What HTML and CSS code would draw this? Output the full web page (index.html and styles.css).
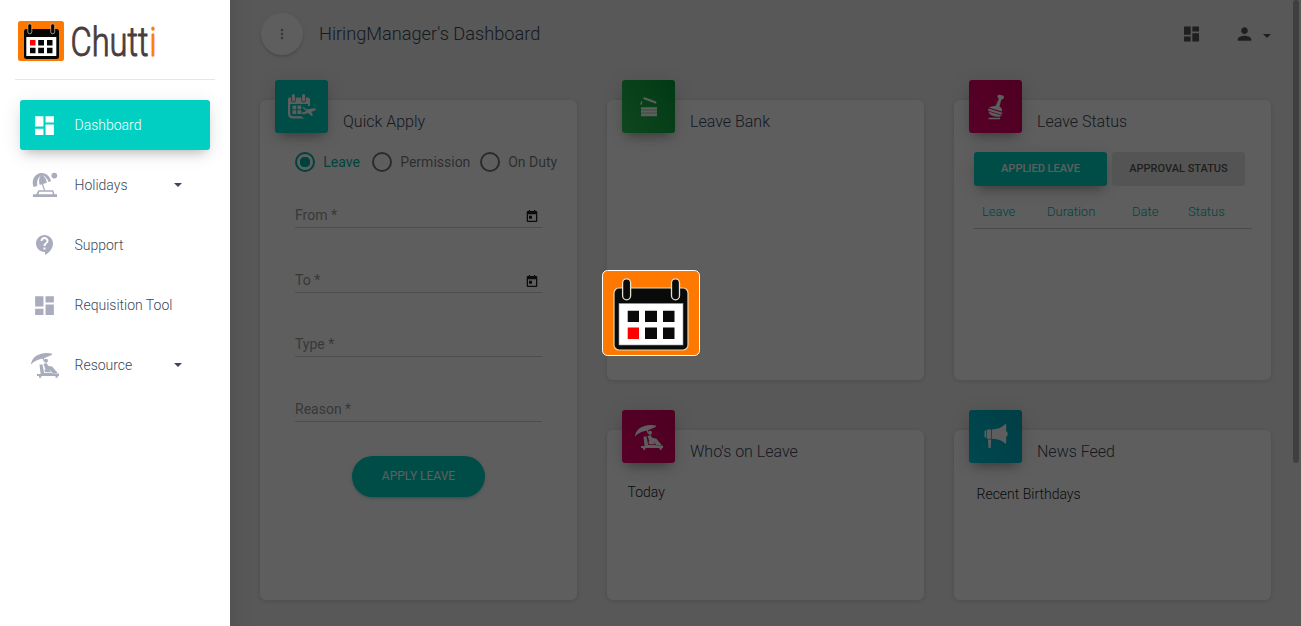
FILE: index.html
```html
<!DOCTYPE html>
<html lang="en">
<head>
<meta charset="utf-8">
<title>Chutti</title>
<link rel="stylesheet" href="styles.css">
</head>
<body>
<svg class="defs" aria-hidden="true">
  <symbol id="dash" viewBox="0 0 24 24"><path d="M3 13h8V3H3v10zm0 8h8v-6H3v6zm10 0h8V11h-8v10zm0-18v6h8V3h-8z"/></symbol>
  <symbol id="lounger" viewBox="0 0 28 26">
    <path d="M0 12.500C.5 5 9-.8 21 1.500L20.700 3 13 6.300C7 7.500 3 9 0 12.500z"/>
    <path d="M11.500 6l1.200-.4 1 3.500-1 .5z"/>
    <circle cx="15" cy="8.800" r="2"/>
    <path d="M8.500 12.500h3l1.700 8.500h6.300l6 .8 2.500-.2V24h-1.200v1.800h-2.300V24H10.300v1.800H8V24H6v-2h3.600z"/>
    <path d="M12.500 12l3-1 1.700 2.800 4.300 1 2.500 3.300 2.500 2.300-.5 1-4.500-.2-2-2.700-4.800-.5z"/>
    <path d="M13.400 17.500l5 .6 2 2.200h-6.500z"/>
  </symbol>
  <symbol id="umbrella" viewBox="0 0 26 26">
    <path d="M1.500 15C-1 8 3 1.500 9 1 14 .8 18 4 19 9.300l-2.500.6C15.500 7 13.500 4.500 10.500 3c3 2.500 4 5 4.300 7.800L7.700 13C6.500 9 7 5.500 9.300 3 5.500 6 4.700 9.500 5.300 14z"/>
    <path d="M9.800 12l1.200-.3 2.300 7H12z"/><circle cx="22.300" cy="3.600" r="2.900"/>
    <path d="M6.300 18.300h15l1.200 3.900H25v2.800H1v-2.800h3.300zm1 1.500L6.500 22.200h14.400l-.7-2.400z" fill-rule="evenodd"/>
  </symbol>
  <symbol id="datepick" viewBox="0 0 12 13"><path d="M1.800 1h1V0h1.300v1h3.800V0h1.300v1h1Q11.300 1 11.300 2.200v8.600Q11.300 12 10.200 12H1.800Q.7 12 .7 10.800V2.200Q.7 1 1.800 1zM2 4.200v6.500h8V4.200zM3 5.700h3v3H3z" fill-rule="evenodd"/></symbol>
</svg>

<aside class="sidebar">
  <div class="brand">
    <svg class="brand-mark" viewBox="0 0 46 40">
      <rect width="46" height="40" rx="2.500" fill="#ff7800"/>
      <rect x="6" y="8" width="35" height="30" rx="2.500" fill="#050505"/>
      <rect x="8.300" y="16" width="30" height="19" fill="#fff"/>
      <g fill="#050505" stroke="#e8c9a8" stroke-width=".7"><rect x="9.800" y="2.800" width="4" height="10" rx="2"/><rect x="32.700" y="2.800" width="4" height="10" rx="2"/></g>
      <path fill="red" d="M12 19h5.500v5.500H12z"/>
      <path fill="#050505" d="M20.200 19H26v5.500h-5.800zM29 19h5.500v5.500H29zM12 26.800h5.500v5.500H12zM20.200 26.800H26v5.500h-5.800zM29 26.800h5.500v5.500H29z"/>
    </svg>
    <svg class="brand-name" viewBox="0 0 88 42"><text x="-.5" y="35" textLength="78" lengthAdjust="spacingAndGlyphs">Chutt</text><text class="accent" x="78.500" y="35" textLength="7" lengthAdjust="spacingAndGlyphs">i</text></svg>
  </div>
  <nav class="menu">
    <a class="item active"><span class="ico"><svg class="i25"><use href="#dash"/></svg></span><span class="label">Dashboard</span></a>
    <a class="item"><span class="ico"><svg class="umb"><use href="#umbrella"/></svg></span><span class="label">Holidays</span><i class="caret"></i></a>
    <a class="item"><span class="ico"><svg class="i22" viewBox="0 0 24 24"><path d="M11.500 2C6.810 2 3 5.810 3 10.500S6.810 19 11.500 19h.5v3c4.860-2.340 8-7 8-11.500C20 5.810 16.190 2 11.500 2zm1 14.500h-2v-2h2v2zm0-3.500h-2c0-3.250 3-3 3-5 0-1.100-.9-2-2-2s-2 .9-2 2h-2c0-2.210 1.790-4 4-4s4 1.790 4 4c0 2.500-3 2.750-3 5z"/></svg></span><span class="label">Support</span></a>
    <a class="item"><span class="ico"><svg class="i25"><use href="#dash"/></svg></span><span class="label">Requisition Tool</span></a>
    <a class="item"><span class="ico"><svg class="lounge"><use href="#lounger"/></svg></span><span class="label">Resource</span><i class="caret"></i></a>
  </nav>
</aside>

<main class="main">
  <header class="topbar">
    <button class="round"><svg viewBox="0 0 24 24"><path d="M12 8c1.100 0 2-.9 2-2s-.9-2-2-2-2 .9-2 2 .9 2 2 2zm0 2c-1.100 0-2 .9-2 2s.9 2 2 2 2-.9 2-2-.9-2-2-2zm0 6c-1.100 0-2 .9-2 2s.9 2 2 2 2-.9 2-2-.9-2-2-2z"/></svg></button>
    <h1>HiringManager's Dashboard</h1>
    <svg class="top-dash"><use href="#dash"/></svg>
    <svg class="top-user" viewBox="0 0 24 24"><path d="M12 12c2.210 0 4-1.790 4-4s-1.790-4-4-4-4 1.790-4 4 1.790 4 4 4zm0 2c-2.670 0-8 1.340-8 4v2h16v-2c0-2.660-5.330-4-8-4z"/></svg>
    <i class="caret"></i>
  </header>

  <div class="grid">
    <section class="card tall">
      <div class="head"><div class="tile teal"><svg class="tile-cal" viewBox="0 0 28 26">
        <path d="M0 5q0-1.500 1.500-1.500H3V6q0 2.500 2.400 2.500T7.800 6V3.500h5.400V6q0 2.500 2.400 2.500T18 6V3.500h1.500Q22 3.500 22 5v7h-2v-2H2.200v9.500q0 2.800 3 2.800H13l3.500 2.200H5Q0 24.500 0 19.500z"/>
        <rect x="3.900" width="3" height="7.500" rx="1.500"/><rect x="14.100" width="3" height="7.500" rx="1.500"/>
        <path d="M4.500 11.500h3.700v3.700H4.500zm5 0h3.700v3.700H9.500zm-5 4.800h3.700V20H4.500zm5 0h3.700V20H9.500z"/>
        <path d="M14 13.300h2l2.500 2.200 7-1.200q2.500 0 2.500 1.200-1 1.500-4 2l-.7.500 1.700 3-1.500 1-3.300-3-5.200 1.500-2-2h1l2.500-.5 1.700-1z"/>
      </svg></div><h2>Quick Apply</h2></div>
      <div class="radios"><label class="on"><i></i>Leave</label><label><i></i>Permission</label><label><i></i>On Duty</label></div>
      <div class="form">
        <div class="field"><span>From *</span><svg class="pick"><use href="#datepick"/></svg></div>
        <div class="field"><span>To *</span><svg class="pick"><use href="#datepick"/></svg></div>
        <div class="field short"><span>Type *</span></div>
        <div class="field"><span>Reason *</span></div>
      </div>
      <button class="apply">APPLY LEAVE</button>
    </section>

    <section class="card">
      <div class="head"><div class="tile green"><svg class="tile-bank" viewBox="0 0 18 20"><path d="M4.600.2Q3 .2 3.200 2L16 6.800q1-.6 0-2.300zM1.500 4L0 7.500h1.800l.5-3.500zM1 10.300h16v2.500H1zM1 13.300h16v2.500H1zM1 16.300h16v3H1z"/></svg></div><h2>Leave Bank</h2></div>
    </section>

    <section class="card">
      <div class="head"><div class="tile pink"><svg class="tile-stamp" viewBox="0 0 16 26"><path d="M9.300 2.500Q9.500 0 12 1 16 .8 16 3.500L15 5 13.200 6 11.500 12.500Q14.500 14 14 17.500L1 13.700Q4 11.500 7.500 12L10.800 5zM.3 14.500l14 4.200-.5 2L.2 16.700zM.3 17.500l13.500 4-2 1.300Q2 23 .3 17.500zM.5 23.800h11.500v1.500H.5z"/></svg></div><h2>Leave Status</h2></div>
      <div class="tabs"><button class="tab selected">APPLIED LEAVE</button><button class="tab">APPROVAL STATUS</button></div>
      <div class="columns"><span>Leave</span><span>Duration</span><span>Date</span><span>Status</span></div>
    </section>

    <section class="card">
      <div class="head"><div class="tile pink"><svg class="lounge"><use href="#lounger"/></svg></div><h2>Who's on Leave</h2></div>
      <p class="today">Today</p>
    </section>

    <section class="card">
      <div class="head"><div class="tile cyan"><svg class="tile-horn" viewBox="0 0 24 25"><path d="M.5 7L2.300 6v8L.5 13zM3 5.500h4v9.300H3zM7.800 5.500Q17 5 21 .3h1.200v6.900q1.500.3 1.500 2.800t-1.500 2.600v7H21Q17 15 7.800 14.800zM4 15.500h3.200L6.700 24H4.500z"/></svg></div><h2>News Feed</h2></div>
      <p class="birthdays">Recent Birthdays</p>
    </section>
  </div>
  <div class="scrollbar"></div>
</main>

<div class="overlay">
  <svg class="loader" viewBox="0 0 98 86">
    <rect x=".5" y=".5" width="97" height="85" rx="5" fill="#ff7800" stroke="#fff"/>
    <rect x="12" y="18" width="74" height="62" rx="5" fill="#090b0a" stroke="#e8d9b5" stroke-width="1.200"/>
    <rect x="17" y="33.500" width="64" height="41.500" fill="#fff" stroke="#999" stroke-width=".6"/>
    <g fill="#090b0a" stroke="#e5dfd0" stroke-width="1.300"><rect x="20.600" y="8.800" width="8" height="21" rx="4"/><rect x="69.500" y="8.800" width="8" height="21" rx="4"/></g>
    <path fill="#090b0a" d="M25.700 40.700h11.300v11.300H25.700zM43 40.700h12v11.300H43zM61 40.700h11.500v11.300H61zM43 57.500h12V69H43zM61 57.500h11.500V69H61z"/>
    <path fill="red" d="M25.700 57.500h11.300V69H25.700z"/>
  </svg>
</div>
</body>
</html>
```
FILE: styles.css
```css
* { box-sizing: border-box; }
body {
  margin: 0;
  height: 626px;
  overflow: hidden;
  display: flex;
  background: #eee;
  color: #3c4858;
  font-family: Roboto, "Liberation Sans", sans-serif;
  font-weight: 300;
  font-size: 14px;
}
h1, h2, p { margin: 0; font-weight: 300; }
button { border: 0; padding: 0; font-family: inherit; }
svg { display: block; flex: none; fill: currentColor; }
.defs { position: absolute; width: 0; height: 0; }
.caret { width: 0; height: 0; border: 4px solid transparent; border-top-color: currentColor; border-bottom: 0; }

.sidebar {
  position: relative;
  z-index: 3;
  flex: none;
  width: 230px;
  padding: 0 15px;
  background: #fff;
}
.brand { display: flex; height: 80px; padding: 21px 0 0 3px; border-bottom: 1px solid #e6e6e6; width: 200px; }
.brand-mark { width: 46px; height: 40px; }
.brand-name { width: 88px; height: 42px; margin-left: 7px; overflow: visible; fill: #493d3e; stroke: #493d3e; stroke-width: 1; stroke-linejoin: round; font-size: 40px; }
.accent { fill: #ff7800; stroke: #ff7800; }
.menu { display: flex; flex-direction: column; gap: 10px; padding: 20px 5px 0; }
.item { display: flex; align-items: center; height: 50px; width: 190px; border-radius: 3px; color: #3c4858; }
.ico { width: 49px; display: flex; justify-content: center; color: #a9acbd; }
.label { width: 99px; margin-left: 5.500px; margin-right: .5px; white-space: nowrap; }
.item.active { background: #00cfc2; color: #fff; box-shadow: 0 4px 20px 0 rgba(0,0,0,.1), 0 7px 10px -5px rgba(0,0,0,.22); }
.active .ico { color: #fff; }
.i25 { width: 25px; height: 25px; }
.i22 { width: 24px; height: 24px; }
.umb { width: 26px; height: 26px; }
.lounge { width: 28px; height: 26px; }

.main { position: relative; flex: 1; padding: 0 30px; box-shadow: inset 24px 0 24px -24px rgba(0,0,0,.12); }
.topbar { display: flex; align-items: center; height: 68px; padding-left: 1px; }
.round { width: 42px; height: 42px; border-radius: 50%; background: #fff; color: #999; display: flex; align-items: center; justify-content: center; box-shadow: 0 2px 2px rgba(0,0,0,.1), 0 1px 5px rgba(0,0,0,.08); }
.round svg { width: 16px; height: 16px; }
.topbar h1 { flex: 1; margin: -2px 0 0 16px; font-size: 18.200px; }
.top-dash { width: 21px; height: 20px; color: #555; margin-right: 32px; }
.top-user { width: 21px; height: 20px; color: #555; margin-right: 8px; }
.topbar .caret { color: #555; margin: 3px 0 0 0; }

.grid { display: grid; grid-template-columns: repeat(3, 317px); grid-template-rows: 280px 170px; gap: 50px 30px; padding-top: 32px; }
.card { background: #fff; border-radius: 6px; box-shadow: 0 1px 4px rgba(0,0,0,.14); }
.tall { grid-row: span 2; }
.head { display: flex; height: 33px; padding-left: 15px; }
.tile { width: 53px; height: 53px; margin-top: -20px; border-radius: 3px; color: #fff; display: flex; align-items: center; justify-content: center; box-shadow: 0 4px 20px rgba(0,0,0,.14), 0 7px 10px -5px rgba(0,0,0,.3); }
.head h2 { margin: 11px 0 0 15px; font-size: 16px; line-height: 21px; }
.teal { background: #00cfc2; }
.green { background: linear-gradient(60deg, #31c857, #00a83f); }
.green { background: linear-gradient(60deg, #2bc052, #009c38); }
.pink { background: linear-gradient(60deg, #ee0070, #d2005a); }
.cyan { background: linear-gradient(60deg, #00c2d6, #00a8bc); }
.tile-cal { width: 28px; height: 26px; }
.tile-bank { width: 18px; height: 20px; }
.tile-stamp { width: 16px; height: 26px; }
.tile-horn { width: 24px; height: 25px; }

.radios { display: flex; padding: 18px 0 0 35px; color: rgba(0,0,0,.54); font-weight: 400; line-height: 22px; }
.radios label { display: flex; align-items: center; margin-right: 12px; }
.radios label + label { margin-right: 9.500px; }
.radios i { width: 20px; height: 20px; margin-right: 8.300px; border: 2px solid #757575; border-radius: 50%; }
.radios .on { color: #00b5a5; }
.radios .on i { border-color: #00b5a5; background: radial-gradient(circle, #00b5a5 5px, transparent 5.500px); }
.form { width: 282px; padding: 30px 0 0 35px; }
.field { display: flex; justify-content: space-between; height: 25px; margin-bottom: 40px; border-bottom: 1px solid #d2d2d2; color: #999; font-weight: 400; line-height: 24px; }
.field.short { margin: -1px 0 40px; }
.pick { width: 12px; height: 13px; margin: 7px 4px 0 0; color: #222; }
.apply { display: block; width: 133px; height: 41px; margin: -6px auto 0; padding-bottom: 2px; border-radius: 21px; background: #00cfc2; color: #fff; font-size: 12px; box-shadow: 0 2px 2px rgba(0,207,194,.14), 0 3px 1px -2px rgba(0,207,194,.2), 0 1px 5px rgba(0,0,0,.12); }

.tabs { display: flex; gap: 5px; padding: 19px 0 0 20px; }
.tab { width: 133px; height: 34px; padding-bottom: 1px; border-radius: 3px; background: #e5e5e5; color: #555; font-size: 11px; font-weight: 500; }
.tab.selected { background: #00cfc2; color: #fff; box-shadow: 0 4px 20px rgba(0,0,0,.14), 0 7px 10px -5px rgba(0,0,0,.3); }
.columns { display: grid; grid-template-columns: 65px 85px 56px auto; width: 278px; height: 43px; margin-left: 20px; padding: 16px 0 0 8px; border-bottom: 1px solid #c9c9c9; color: #00b5a5; font-size: 13px; line-height: 20px; }
.today { padding: 19px 0 0 20.500px; line-height: 20px; color: #222; }
.birthdays { padding: 21px 0 0 22.500px; line-height: 20px; color: #222; }

.overlay { position: absolute; inset: 0; z-index: 2; background: rgba(0,0,0,.63); display: flex; align-items: flex-start; justify-content: center; padding-top: 270px; }
.loader { width: 98px; height: 86px; margin-left: 1px; }
.scrollbar { position: absolute; top: 0; right: 2px; width: 6px; height: 463px; border-radius: 3px; background: #aaa; }
```
